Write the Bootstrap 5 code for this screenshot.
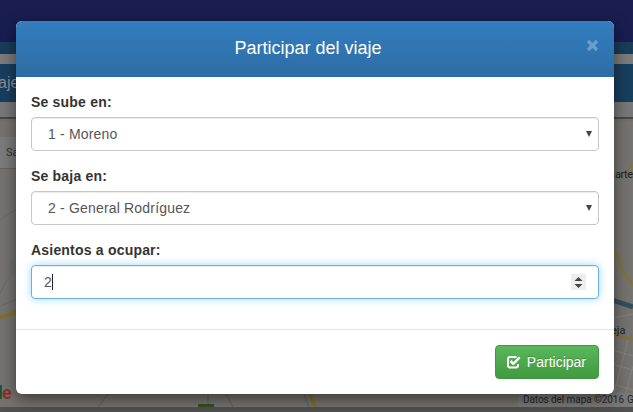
<!DOCTYPE html>
<html lang="es">
<head>
<meta charset="utf-8">
<meta name="viewport" content="width=device-width, initial-scale=1">
<title>Participar del viaje</title>
<link href="https://cdn.jsdelivr.net/npm/bootstrap@5.3.0/dist/css/bootstrap.min.css" rel="stylesheet">
<style>
  body { font-family: "Liberation Sans", Arial, sans-serif; font-size: 14px; line-height: 20px; color: #333; background: #505050; height: 412px; }
  .site-top { height: 42px; background: #191d50; }
  .site-strip { height: 12px; background: #1a3c5a; }
  .site-gap { height: 10px; background: #7b7b7b; }
  .site-title { height: 38px; background: #183e5e; color: #8a8f94; font-size: 16px; line-height: 38px; }
  .site-title span { margin-left: -2px; }
  .site-sub { height: 15px; background: #777; }
  .site-rule { height: 5px; background: #707070; border-top: 2px solid #484848; }
  .site-map { height: 285px; background: #75736f; }
  .site-map svg { display: block; }
  .trip-dialog { top: 21px; left: 16px; width: 598px; height: 373px; }
  .trip-dialog .modal-content { height: 373px; border: 0; border-radius: 6px; background: #fff; box-shadow: 0 5px 15px rgba(0,0,0,.5); overflow: hidden; color: #333; }
  .trip-dialog .modal-header { height: 56px; background: linear-gradient(#337ebe, #2d6ca5); border: 0; border-radius: 0; }
  .trip-dialog .modal-title { font-size: 18px; line-height: 26px; font-weight: 400; color: #fff; padding-right: 14px; padding-bottom: 2px; }
  .close-x { top: 18px; right: 15px; width: 13px; height: 13px; background: none; line-height: 0; }
  .trip-dialog .modal-body { padding: 15px; }
  .field-group { margin-bottom: 15px; }
  .field-group .form-label { display: block; height: 20px; line-height: 20px; margin: 0 0 5px; font-weight: 700; letter-spacing: .2px; }
  .field-group .form-control { height: 34px; padding: 6px 12px; font-size: 14px; line-height: 20px; color: #555; background: #fff; border: 1px solid #c8c8c8; border-radius: 4px; box-shadow: inset 0 1px 1px rgba(0,0,0,.075); letter-spacing: .18px; }
  .field-group .pick { padding: 6px 6px 6px 16px; }
  .field-group .active-field { border-color: #66afe9; box-shadow: inset 0 1px 1px rgba(0,0,0,.075), 0 0 8px rgba(102,190,240,.6); }
  .caret-bar { width: 1px; height: 16px; background: #222; }
  .stepper { width: 15px; height: 16px; background: #eee; }
  .trip-dialog .modal-footer { height: 65px; padding: 15px; border-top: 1px solid #e5e5e5; }
  .trip-dialog .modal-footer > * { margin: 0; }
  .btn-join { width: 104px; height: 34px; padding: 0 12px 0 11px; font-size: 14px; line-height: 20px; color: #fff; background: linear-gradient(#5cb85c, #3f9a3f) border-box; border: 1px solid #419641; border-radius: 4px; text-shadow: 0 -1px 0 rgba(0,0,0,.2); }
  .btn-join:hover { color: #fff; }
</style>
<script src="https://cdn.jsdelivr.net/npm/bootstrap@5.3.0/dist/js/bootstrap.bundle.min.js"></script>
</head>
<body class="overflow-hidden position-relative">
  <div class="page-behind" aria-hidden="true">
    <div class="site-top"></div>
    <div class="site-strip"></div>
    <div class="site-gap"></div>
    <div class="site-title overflow-hidden"><span>aje</span></div>
    <div class="site-sub"></div>
    <div class="site-rule"></div>
    <div class="site-map">
      <svg width="633" height="285" viewBox="0 122 633 285" font-family="Roboto, sans-serif">
        <rect x="0" y="137" width="40" height="31" fill="#7b7b7b"/>
        <path d="M0 168.5H40" stroke="#656361"/>
        <text x="6" y="156" font-size="11" fill="#333">Sa</text>
        <g fill="none">
          <path d="M0 220Q10 211 20 208M0 293Q8 276 20 266M0 306Q8 303 20 298" stroke="#686866"/>
          <path d="M8 276L10 260L18 262V276Z" fill="#6d716b"/>
          <path d="M0 317Q9 316 20 310" stroke="#80702f" stroke-width="4"/>
          <path d="M208 394V404M226 394L233 407M304 394L309 407M98 407L108 394" stroke="#62605c"/>
          <path d="M310 394L315 407" stroke="#80702f" stroke-width="4"/>
          <path d="M612 252Q619 253 620 263Q622 273 633 285M628 171L633 166M612 333L633 340" stroke="#81733c" stroke-width="3"/>
          <path d="M612 300L633 307" stroke="#354d60" stroke-width="5"/>
          <path d="M612 350L633 356M612 364L633 370M612 384L633 390M628 340L614 394M633 366L622 407M612 318L633 314" stroke="#85827c"/>
        </g>
        <rect x="198" y="404" width="16" height="3" fill="#34501f"/>
        <rect x="518" y="393" width="115" height="14" fill="#7a7a78"/>
        <text x="523" y="403" font-size="10" fill="#272727" textLength="101">Datos del mapa ©2016</text>
        <text x="627" y="403" font-size="10" fill="#272727">G</text>
        <text x="615" y="178" font-size="11" fill="#222" textLength="18">arte</text>
        <text x="611" y="334" font-size="11" fill="#222">eja</text>
        <text x="-2" y="399" font-size="18" font-weight="700" fill="#1b5137">l</text>
        <text x="2" y="399" font-size="18" font-weight="700" fill="#8b3030">e</text>
      </svg>
    </div>
  </div>

  <div class="trip-dialog position-absolute" role="dialog" aria-labelledby="tripTitle">
    <div class="modal-content">
      <div class="modal-header d-flex justify-content-center position-relative p-0">
        <h4 class="modal-title m-0" id="tripTitle">Participar del viaje</h4>
        <button type="button" class="close-x position-absolute border-0 p-0" aria-label="Cerrar">
          <svg width="13" height="13" viewBox="0 0 13 13"><path d="M2 2L11 11M11 2L2 11" stroke="#699fcc" stroke-width="3.4"/></svg>
        </button>
      </div>
      <div class="modal-body">
        <div class="field-group">
          <div class="form-label">Se sube en:</div>
          <div class="form-control pick d-flex align-items-center justify-content-between">
            <span>1 - Moreno</span>
            <svg width="6" height="6" viewBox="0 0 6 6"><path d="M0 0H6L3 6Z" fill="#444"/></svg>
          </div>
        </div>
        <div class="field-group">
          <div class="form-label">Se baja en:</div>
          <div class="form-control pick d-flex align-items-center justify-content-between">
            <span>2 - General Rodríguez</span>
            <svg width="6" height="6" viewBox="0 0 6 6"><path d="M0 0H6L3 6Z" fill="#444"/></svg>
          </div>
        </div>
        <div class="field-group">
          <div class="form-label">Asientos a ocupar:</div>
          <div class="form-control active-field d-flex align-items-center">
            <span>2</span><span class="caret-bar"></span>
            <svg class="stepper ms-auto" width="15" height="16" viewBox="0 0 15 16"><path d="M3.500 7L7.500 3L11.500 7ZM3.500 10H11.500L7.500 14Z" fill="#444"/></svg>
          </div>
        </div>
      </div>
      <div class="modal-footer">
        <button type="button" class="btn btn-join d-flex align-items-center justify-content-between">
          <svg width="14" height="14" viewBox="0 0 14 14" fill="none" stroke="#fff"><path d="M9.500 2H3Q1 2 1 4V10.500Q1 12.500 3 12.500H9Q11 12.500 11 10.500V9" stroke-width="2"/><path d="M3.500 6L6.300 8.800L12.700 2.300" stroke-width="2.500"/></svg>
          <span>Participar</span>
        </button>
      </div>
    </div>
  </div>
</body>
</html>
